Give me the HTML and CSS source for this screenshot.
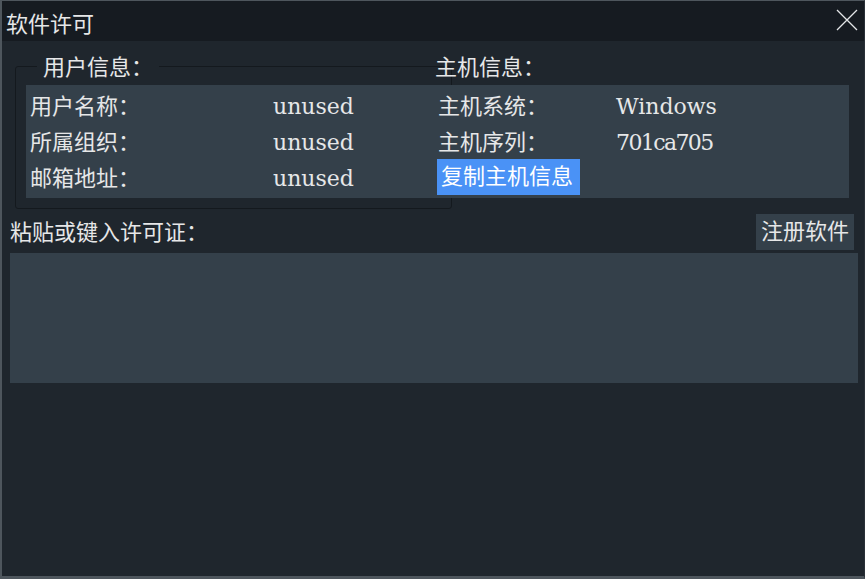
FILE: index.html
```html
<!DOCTYPE html>
<html lang="zh-CN">
<head>
<meta charset="utf-8">
<title>软件许可</title>
<link rel="stylesheet" href="styles.css">
</head>
<body>
<div class="window">
  <div class="titlebar">
    <span class="title">软件许可</span>
    <button class="close" aria-label="关闭">
      <svg width="22" height="22" viewBox="0 0 22 22"><path d="M1 1 L21 21 M21 1 L1 21" stroke="#e4e6e8" stroke-width="1.3" fill="none"/></svg>
    </button>
  </div>
  <div class="content">
    <section class="group">
      <div class="group-head">
        <span class="legend">用户信息：</span>
        <span class="host-head">主机信息：</span>
      </div>
      <div class="panel">
        <span>用户名称：</span><span>unused</span><span class="host-label">主机系统：</span><span>Windows</span>
        <span>所属组织：</span><span>unused</span><span class="host-label">主机序列：</span><span class="serial">701ca705</span>
        <span>邮箱地址：</span><span>unused</span><button class="copy">复制主机信息</button><span></span>
      </div>
    </section>
    <div class="license-head">
      <span class="license-label">粘贴或键入许可证：</span>
      <button class="register">注册软件</button>
    </div>
    <div class="license-box"></div>
  </div>
</div>
</body>
</html>
```

FILE: styles.css
```css
html, body {
  margin: 0;
  padding: 0;
  background: #1f262d;
}
body {
  font-family: "DejaVu Serif", "Noto Sans CJK SC", serif;
  font-size: 22px;
  color: #e6e7e8;
}
.window {
  box-sizing: border-box;
  width: 865px;
  height: 579px;
  border-top: 1px solid #4e565d;
  border-left: 2px solid #4e565d;
  border-bottom: 3px solid #4e565d;
  border-right: 1px solid #2a3037;
  background: #1f262d;
  display: flex;
  flex-direction: column;
}
.titlebar {
  height: 40px;
  background: #161b21;
  display: flex;
  align-items: center;
  justify-content: space-between;
  padding: 0 6px 0 4px;
}
.title {
  line-height: 40px;
  margin-top: 2px;
  font-family: "Noto Sans CJK SC", sans-serif;
}
.close {
  background: none;
  border: 0;
  padding: 0;
  width: 22px;
  height: 22px;
  margin-top: -2px;
  display: flex;
}
.content {
  padding: 9px 6px 0 8px;
  display: flex;
  flex-direction: column;
}
.group {
  position: relative;
  margin: 0 9px 0 16px;
  z-index: 0;
}
.group::before {
  content: "";
  position: absolute;
  left: -11px;
  top: 16px;
  width: 437px;
  height: 143px;
  box-sizing: border-box;
  border: 1px solid #14191e;
  border-radius: 3px;
  z-index: -1;
}
.group-head {
  display: grid;
  grid-template-columns: 409px 1fr;
  height: 35px;
  line-height: 35px;
}
.legend {
  justify-self: start;
  margin-left: 11px;
  padding: 0 6px 0 6px;
  background: #1f262d;
  line-height: 35px;
}
.panel {
  background: #34404a;
  display: grid;
  grid-template-columns: 243px 164px 179px 1fr;
  grid-auto-rows: 36px;
  line-height: 36px;
  padding: 3px 0 2px 4px;
}
.panel > span {
  margin-top: 1px;
}
.host-label {
  padding-left: 1px;
}
.serial {
  letter-spacing: -1.6px;
}
.copy {
  justify-self: start;
  font: inherit;
  color: #ffffff;
  background: #4a92f6;
  border: 0;
  padding: 0 7px 0 4px;
  height: 36px;
  line-height: 36px;
  margin-top: -1px;
}
.license-head {
  margin-top: 16px;
  display: flex;
  justify-content: space-between;
  align-items: center;
  height: 36px;
}
.license-label {
  line-height: 36px;
  margin-top: 1px;
}
.register {
  font: inherit;
  color: #e6e7e8;
  background: #34404a;
  border: 0;
  padding: 0 5px 0 5px;
  height: 36px;
  line-height: 36px;
  margin-right: 4px;
}
.license-box {
  margin-top: 3px;
  height: 130px;
  background: #34404a;
}
```
